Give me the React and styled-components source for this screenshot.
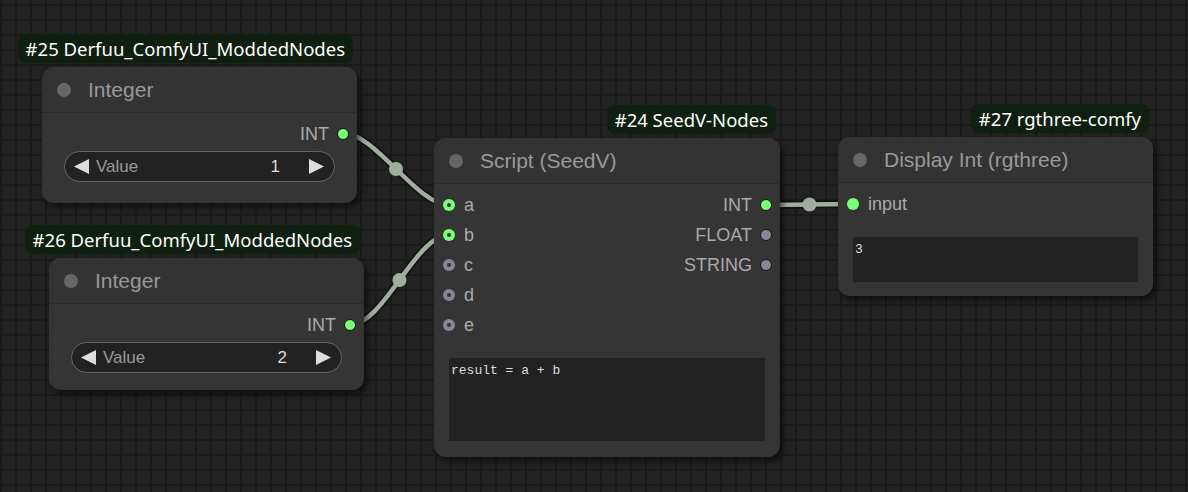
import React from 'react';
import styled, { createGlobalStyle } from 'styled-components';

const GlobalStyle = createGlobalStyle`
  html, body {
    margin: 0;
    padding: 0;
    background: #222;
  }
  body {
    font-family: "Liberation Sans", Arial, sans-serif;
    overflow: hidden;
  }
`;

const INT = '#7f7';
const OTHER = '#878797';
const LINK = '#a0ae9f';

const links = [
  { from: [343, 133], to: [449, 205] },
  { from: [350, 325], to: [449, 235] },
  { from: [766, 205], to: [853, 204] },
];

// ComfyUI style spline: horizontal handles, a quarter of the distance long
const splinePath = ([x1, y1], [x2, y2]) => {
  const d = Math.hypot(x2 - x1, y2 - y1) * 0.25;
  return `M${x1} ${y1} C${x1 + d} ${y1}, ${x2 - d} ${y2}, ${x2} ${y2}`;
};

const midpoint = ([x1, y1], [x2, y2]) => {
  const d = Math.hypot(x2 - x1, y2 - y1) * 0.25;
  return [(x1 + 3 * (x1 + d) + 3 * (x2 - d) + x2) / 8, (y1 + y2) / 2];
};

const App = () => (
  <>
    <GlobalStyle />
    <Canvas>
      <Links width="1188" height="492">
        {links.map((l, i) => {
          const [mx, my] = midpoint(l.from, l.to);
          return (
            <g key={i}>
              <path d={splinePath(l.from, l.to)} stroke="#121212" strokeWidth="8" fill="none" />
              <path d={splinePath(l.from, l.to)} stroke={LINK} strokeWidth="4.5" fill="none" />
              <circle cx={mx} cy={my} r="7" fill={LINK} />
            </g>
          );
        })}
      </Links>

      <Node $x={42} $y={67} $w={315}>
        <Badge>#25 Derfuu_ComfyUI_ModdedNodes</Badge>
        <TitleBar>
          <TitleDot />
          <Title>Integer</Title>
        </TitleBar>
        <Body $pb={21}>
          <Row>
            <span />
            <Output label="INT" color={INT} />
          </Row>
          <NumberWidget label="Value" value="1" />
        </Body>
      </Node>

      <Node $x={49} $y={258} $w={315}>
        <Badge>#26 Derfuu_ComfyUI_ModdedNodes</Badge>
        <TitleBar>
          <TitleDot />
          <Title>Integer</Title>
        </TitleBar>
        <Body $pb={17}>
          <Row>
            <span />
            <Output label="INT" color={INT} />
          </Row>
          <NumberWidget label="Value" value="2" />
        </Body>
      </Node>

      <Node $x={434} $y={138} $w={346}>
        <Badge>#24 SeedV-Nodes</Badge>
        <TitleBar>
          <TitleDot />
          <Title>Script (SeedV)</Title>
        </TitleBar>
        <Body $pb={16}>
          <Row>
            <Input label="a" color={INT} ring />
            <Output label="INT" color={INT} />
          </Row>
          <Row>
            <Input label="b" color={INT} ring />
            <Output label="FLOAT" color={OTHER} />
          </Row>
          <Row>
            <Input label="c" color={OTHER} ring />
            <Output label="STRING" color={OTHER} />
          </Row>
          <Row>
            <Input label="d" color={OTHER} ring />
          </Row>
          <Row>
            <Input label="e" color={OTHER} ring />
          </Row>
          <TextArea $h={83}>result = a + b</TextArea>
        </Body>
      </Node>

      <Node $x={838} $y={137} $w={315}>
        <Badge>#27 rgthree-comfy</Badge>
        <TitleBar>
          <TitleDot />
          <Title>Display Int (rgthree)</Title>
        </TitleBar>
        <Body $pb={14}>
          <Row>
            <Input label="input" color={INT} />
          </Row>
          <TextArea $h={45}>3</TextArea>
        </Body>
      </Node>
    </Canvas>
  </>
);

const Input = ({ label, color, ring }) => (
  <Slot>
    <Dot $color={color} $ring={ring} />
    <SlotLabel>{label}</SlotLabel>
  </Slot>
);

const Output = ({ label, color }) => (
  <Slot $out>
    <SlotLabel>{label}</SlotLabel>
    <Dot $color={color} $outlined />
  </Slot>
);

const NumberWidget = ({ label, value }) => (
  <Widget>
    <Arrow viewBox="0 0 15 15">
      <polygon points="15,0 15,15 0,7.5" />
    </Arrow>
    <WidgetLabel>{label}</WidgetLabel>
    <WidgetValue>{value}</WidgetValue>
    <Arrow viewBox="0 0 15 15">
      <polygon points="0,0 0,15 15,7.5" />
    </Arrow>
  </Widget>
);

// Styled Components
const Canvas = styled.div`
  position: relative;
  width: 1188px;
  height: 492px;
  overflow: hidden;
  background-color: #222;
  background-image:
    linear-gradient(to right, #1a1a1a 2px, transparent 2px),
    linear-gradient(to bottom, #1a1a1a 2px, transparent 2px);
  background-size: 15px 15px;
  background-position: 0 4px;
`;

const Links = styled.svg`
  position: absolute;
  inset: 0;
  pointer-events: none;
`;

const Node = styled.div`
  position: absolute;
  left: ${(p) => p.$x}px;
  top: ${(p) => p.$y}px;
  width: ${(p) => p.$w}px;
  background: #353535;
  border-radius: 12px;
  box-shadow: 3px 4px 6px rgba(0, 0, 0, 0.55);
`;

const Badge = styled.div`
  position: absolute;
  right: 4px;
  bottom: calc(100% + 4px);
  height: 29px;
  line-height: 29px;
  padding: 0 8px;
  border-radius: 8px;
  background: #0f1f10;
  color: #fff;
  font-family: "Noto Sans", sans-serif;
  font-size: 18.5px;
  white-space: nowrap;
`;

const TitleBar = styled.div`
  display: flex;
  align-items: center;
  gap: 17px;
  height: 45px;
  padding-left: 15px;
  border-bottom: 1px solid #2a2a2a;
  background: #333;
  border-radius: 12px 12px 0 0;
`;

const TitleDot = styled.div`
  width: 14px;
  height: 14px;
  border-radius: 50%;
  background: #666;
`;

const Title = styled.span`
  font-size: 21px;
  color: #999;
`;

const Body = styled.div`
  padding: 6px 0 ${(p) => p.$pb}px;
`;

const Row = styled.div`
  display: flex;
  justify-content: space-between;
  align-items: center;
  height: 30px;
`;

const Slot = styled.div`
  display: flex;
  align-items: center;
  gap: 9px;
  ${(p) => (p.$out ? 'padding-right: 8px; gap: 8px;' : 'padding-left: 9px;')}
`;

const Dot = styled.div`
  position: relative;
  width: 12px;
  height: 12px;
  box-sizing: border-box;
  border-radius: 50%;
  background: ${(p) => p.$color};
  border: ${(p) => (p.$outlined ? '1.5px solid #111' : 'none')};

  &::after {
    content: '';
    display: ${(p) => (p.$ring ? 'block' : 'none')};
    position: absolute;
    left: 4px;
    top: 4px;
    width: 4px;
    height: 4px;
    border-radius: 50%;
    background: #353535;
  }
`;

const SlotLabel = styled.span`
  font-size: 18px;
  color: #aaa;
`;

const Widget = styled.div`
  display: flex;
  align-items: center;
  height: 31px;
  box-sizing: border-box;
  margin: 2px 22px 0;
  padding: 0 10px 0 9px;
  border: 1px solid #666;
  border-radius: 16px;
  background: #222;
`;

const Arrow = styled.svg`
  width: 15px;
  height: 15px;
  fill: #ddd;
  flex-shrink: 0;
`;

const WidgetLabel = styled.span`
  margin-left: 7px;
  flex: 1;
  font-size: 17px;
  color: #999;
`;

const WidgetValue = styled.span`
  margin-right: 29px;
  font-size: 17px;
  color: #ddd;
`;

const TextArea = styled.div`
  height: ${(p) => p.$h}px;
  box-sizing: border-box;
  margin: 18px 15px 0;
  padding: 5px 2px;
  background: #222;
  color: #ddd;
  font-family: "Liberation Mono", monospace;
  font-size: 13px;
  white-space: pre;
`;

export default App;
